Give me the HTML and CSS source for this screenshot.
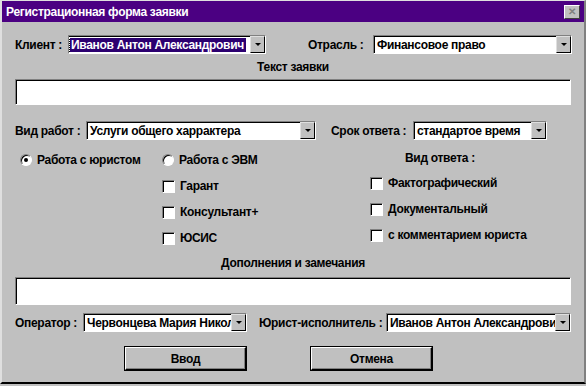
FILE: index.html
```html
<!DOCTYPE html>
<html lang="ru">
<head>
    <meta charset="UTF-8">
    <title>Регистрационная форма заявки</title>
    <link rel="stylesheet" href="styles.css">
</head>
<body>
<div class="window">
    <div class="titlebar">
        <span class="title">Регистрационная форма заявки</span>
        <span class="close">&#x2715;</span>
    </div>

    <div class="content">
        <div class="row row-top">
            <span class="label lbl-client">Клиент :</span>
            <div class="combo w-client">
                <span class="value"><span class="selected">Иванов Антон Александрович</span></span>
                <span class="arrow"></span>
            </div>
            <span class="label lbl-branch">Отрасль :</span>
            <div class="combo w-branch">
                <span class="value">Финансовое право</span>
                <span class="arrow"></span>
            </div>
        </div>

        <div class="caption cap-text">Текст заявки</div>
        <div class="textbox tb-text"></div>

        <div class="row row-work">
            <span class="label lbl-work">Вид работ :</span>
            <div class="combo w-work">
                <span class="value">Услуги общего харрактера</span>
                <span class="arrow"></span>
            </div>
            <span class="label lbl-term">Срок ответа :</span>
            <div class="combo w-term">
                <span class="value">стандартое время</span>
                <span class="arrow"></span>
            </div>
        </div>

        <div class="options">
            <div class="col col-1">
                <label class="opt"><span class="radio checked"></span>Работа с юристом</label>
            </div>
            <div class="col col-2">
                <label class="opt"><span class="radio"></span>Работа с ЭВМ</label>
                <label class="opt chk-row"><span class="check"></span>Гарант</label>
                <label class="opt chk-row"><span class="check"></span>Консультант+</label>
                <label class="opt chk-row"><span class="check"></span>ЮСИС</label>
            </div>
            <div class="col col-3">
                <div class="subhead">Вид ответа :</div>
                <label class="opt chk-row first"><span class="check"></span>Фактографический</label>
                <label class="opt chk-row"><span class="check"></span>Документальный</label>
                <label class="opt chk-row"><span class="check"></span>с комментарием юриста</label>
            </div>
        </div>

        <div class="caption cap-notes">Дополнения и замечания</div>
        <div class="textbox tb-notes"></div>

        <div class="row row-bottom">
            <span class="label lbl-oper">Оператор :</span>
            <div class="combo w-oper">
                <span class="value">Червонцева Мария Николаевна</span>
                <span class="arrow"></span>
            </div>
            <span class="label lbl-lawyer">Юрист-исполнитель :</span>
            <div class="combo w-lawyer">
                <span class="value">Иванов Антон Александрович</span>
                <span class="arrow"></span>
            </div>
        </div>

        <div class="buttons">
            <button class="button">Ввод</button>
            <button class="button">Отмена</button>
        </div>
    </div>
</div>
</body>
</html>
```

FILE: styles.css
```css
body {
    margin: 0;
    background-color: #c0c0c0;
    font-family: "Liberation Sans", Arial, sans-serif;
    font-size: 12px;
    font-weight: bold;
    letter-spacing: -0.3px;
    color: #000;
}
.window {
    width: 586px;
    height: 384px;
    box-sizing: border-box;
    background-color: #c0c0c0;
    border-left: 2px solid #dfdfdf;
    border-top: 1px solid #dfdfdf;
    border-right: 2px solid #808080;
    border-bottom: 2px solid #000;
}
.titlebar {
    height: 21px;
    background-color: #4b0082;
    color: #fff;
    display: flex;
    align-items: center;
    justify-content: space-between;
    padding: 0 4px 0 4px;
    font-size: 12px;
}
.close {
    width: 14px;
    height: 12px;
    background-color: #c0c0c0;
    color: #808080;
    font-size: 10px;
    line-height: 12px;
    text-align: center;
    letter-spacing: 0;
    border: 1px solid;
    border-color: #fff #404040 #404040 #fff;
}
.content {
    padding: 0 13px 0 13px;
}
.row {
    display: flex;
    align-items: center;
    height: 19px;
}
.row-top {
    margin-top: 13px;
}
.label {
    white-space: nowrap;
    flex: none;
}
.lbl-client { width: 53px; }
.lbl-branch { margin-left: 42px; width: 65px; }
.lbl-work { width: 71px; }
.lbl-term { margin-left: 15px; width: 82px; }
.lbl-oper { width: 68px; }
.lbl-lawyer { margin-left: 12px; width: 127px; }

.combo {
    flex: none;
    height: 19px;
    box-sizing: border-box;
    background-color: #fff;
    border: 1px solid;
    border-color: #808080 #fff #fff #808080;
    box-shadow: inset 1px 1px 0 #000;
    display: flex;
    overflow: hidden;
}
.combo .value {
    flex: 1;
    overflow: hidden;
    white-space: nowrap;
    padding: 2px 0 0 3px;
    line-height: 14px;
}
.selected {
    background-color: #2c0070;
    color: #fff;
    outline: 1px dotted #fff;
    padding: 0 2px 0 1px;
    margin-left: -2px;
}
.arrow {
    width: 15px;
    flex: none;
    background-color: #c0c0c0;
    border: 1px solid;
    border-color: #dfdfdf #000 #000 #dfdfdf;
    box-sizing: border-box;
    display: flex;
    align-items: center;
    justify-content: center;
}
.arrow::after {
    content: "";
    border-left: 3px solid transparent;
    border-right: 3px solid transparent;
    border-top: 3px solid #000;
}
.w-client { width: 198px; }
.w-branch { width: 199px; }
.w-work { width: 230px; }
.w-term { width: 134px; }
.w-oper { width: 164px; }
.w-lawyer { width: 185px; }

.caption {
    text-align: center;
    height: 14px;
    line-height: 14px;
}
.cap-text { margin-top: 6px; }
.cap-notes { margin-top: 11px; }
.textbox {
    box-sizing: border-box;
    background-color: #fff;
    border: 1px solid;
    border-color: #808080 #fff #fff #808080;
    box-shadow: inset 1px 1px 0 #000;
}
.tb-text { margin-top: 5px; height: 26px; }
.tb-notes { margin-top: 7px; height: 28px; }
.row-work {
    margin-top: 16px;
}
.row-bottom {
    margin-top: 8px;
}

.options {
    display: flex;
    margin-top: 13px;
}
.col {
    display: flex;
    flex-direction: column;
}
.col-1 { width: 142px; padding-left: 5px; }
.col-2 { width: 208px; }
.opt {
    display: flex;
    align-items: center;
    gap: 5px;
    height: 14px;
    white-space: nowrap;
}
.chk-row {
    margin-top: 12px;
}
.col-3 .first {
    margin-top: 11px;
}
.subhead {
    height: 14px;
    line-height: 14px;
    padding-left: 35px;
    margin-top: -2px;
}
.radio {
    width: 12px;
    height: 12px;
    box-sizing: border-box;
    border-radius: 50%;
    background-color: #fff;
    border: 1px solid;
    border-color: #808080 #fff #fff #808080;
    box-shadow: inset 1px 1px 0 #000;
    display: flex;
    align-items: center;
    justify-content: center;
}
.radio.checked::after {
    content: "";
    width: 4px;
    height: 4px;
    border-radius: 50%;
    background-color: #000;
}
.check {
    width: 13px;
    height: 13px;
    box-sizing: border-box;
    background-color: #fff;
    border: 1px solid;
    border-color: #808080 #fff #fff #808080;
    box-shadow: inset 1px 1px 0 #000;
}

.buttons {
    display: flex;
    margin-top: 15px;
    padding-left: 110px;
    gap: 65px;
}
.button {
    width: 121px;
    height: 23px;
    background-color: #c0c0c0;
    font-family: inherit;
    font-size: 12px;
    font-weight: bold;
    letter-spacing: inherit;
    border: 1px solid;
    border-color: #fff #000 #000 #fff;
    box-shadow: inset -1px -1px 0 #808080, 0 0 0 1px #000;
    padding: 0;
}
```
